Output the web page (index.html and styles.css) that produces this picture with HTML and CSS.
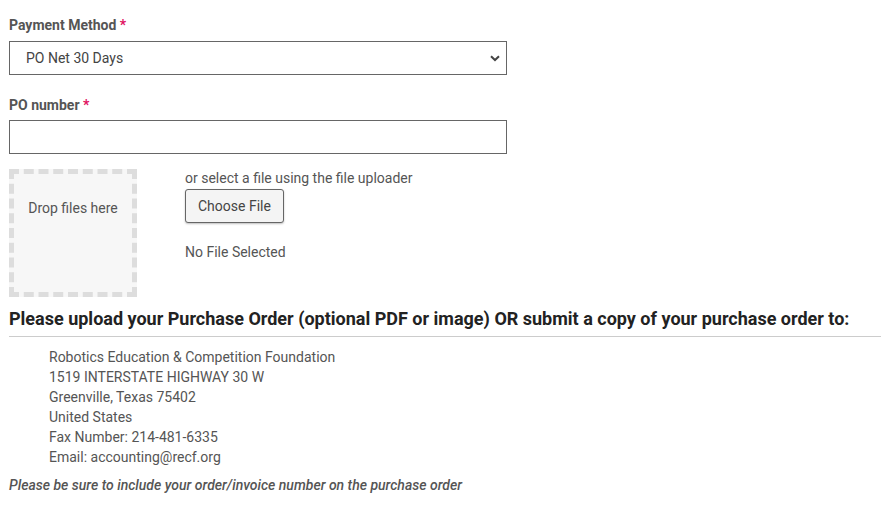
FILE: index.html
```html
<!DOCTYPE html>
<html>
<head>
<meta charset="utf-8">
<link rel="stylesheet" href="styles.css">
</head>
<body>
<div class="page">
  <div class="field">
    <label class="label">Payment Method <span class="req">*</span></label>
    <div class="select">
      <span>PO Net 30 Days</span>
      <svg class="chev" width="10" height="7" viewBox="0 0 10 7"><path d="M1 1.2 L5 5 L9 1.2" fill="none" stroke="#444" stroke-width="2"/></svg>
    </div>
  </div>
  <div class="field second">
    <label class="label">PO number <span class="req">*</span></label>
    <div class="input"></div>
  </div>
  <div class="upload">
    <div class="drop">Drop files here</div>
    <div class="picker">
      <div class="hint">or select a file using the file uploader</div>
      <button class="btn">Choose File</button>
      <div class="none">No File Selected</div>
    </div>
  </div>
  <h3 class="heading">Please upload your Purchase Order (optional PDF or image) OR submit a copy of your purchase order to:</h3>
  <hr class="rule">
  <div class="address">
    <div>Robotics Education &amp; Competition Foundation</div>
    <div>1519 INTERSTATE HIGHWAY 30 W</div>
    <div>Greenville, Texas 75402</div>
    <div>United States</div>
    <div>Fax Number: 214-481-6335</div>
    <div>Email: accounting@recf.org</div>
  </div>
  <p class="note">Please be sure to include your order/invoice number on the purchase order</p>
</div>
</body>
</html>
```
FILE: styles.css
```css
html, body { margin: 0; padding: 0; background: #fff; }
body { font-family: Roboto, "Noto Sans", sans-serif; font-size: 14px; color: #555; }
.page { padding: 15px 0 0 9px; }
.field { display: flex; flex-direction: column; width: 498px; margin-bottom: 20px; }
.label { font-weight: 700; font-size: 14px; line-height: 20px; color: #555; margin-bottom: 6px; }
.req { color: #e0115f; }
.select { height: 34px; box-sizing: border-box; border: 1px solid #666; display: flex; align-items: center; justify-content: space-between; padding: 0 6px 0 16px; color: #444; }
.chev { margin-top: 1px; }
.input { height: 34px; box-sizing: border-box; border: 1px solid #666; }
.field.second { margin-bottom: 15px; }
.field.second .label { margin-bottom: 5px; }
.upload { display: flex; gap: 48px; }
.drop { width: 128px; height: 128px; box-sizing: border-box; border: 5px dashed #ddd; background: #f7f7f7; text-align: center; padding-top: 24px; color: #555; line-height: 20px; }
.picker { display: flex; flex-direction: column; align-items: flex-start; margin-top: -1px; }
.hint { line-height: 20px; }
.btn { font-family: inherit; font-size: 14px; color: #444; background: #f4f4f4; border: 1px solid #666; border-radius: 3px; height: 34px; padding: 0 12px; margin-top: 1px; box-shadow: 0 1px 2px rgba(0,0,0,0.25); }
.none { margin-top: 19px; line-height: 20px; }
.heading { margin: 8px 0 0 0; font-size: 18px; line-height: 28px; font-weight: 700; color: #222; }
.rule { margin: 3px 0 0 0; border: 0; border-top: 1px solid #ccc; }
.address { padding: 10px 0 0 40px; line-height: 20px; }
.note { margin: 8px 0 0 0; font-style: italic; font-weight: 500; font-size: 14px; line-height: 20px; color: #555; }
```
